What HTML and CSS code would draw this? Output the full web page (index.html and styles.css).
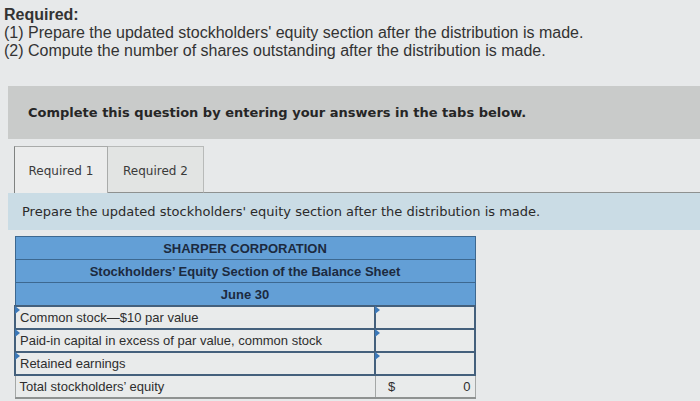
FILE: index.html
```html
<!DOCTYPE html>
<html>
<head>
<meta charset="utf-8">
<link rel="stylesheet" href="styles.css">
</head>
<body>
<div class="req">
  <div class="req-title">Required:</div>
  <div>(1) Prepare the updated stockholders' equity section after the distribution is made.</div>
  <div>(2) Compute the number of shares outstanding after the distribution is made.</div>
</div>
<div class="notice">Complete this question by entering your answers in the tabs below.</div>
<div class="tabs">
  <div class="tab active">Required 1</div>
  <div class="tab">Required 2</div>
  <div class="tab-rest"></div>
</div>
<div class="prompt">Prepare the updated stockholders' equity section after the distribution is made.</div>
<table class="sheet">
  <tr><th colspan="2">SHARPER CORPORATION</th></tr>
  <tr><th colspan="2">Stockholders’ Equity Section of the Balance Sheet</th></tr>
  <tr><th colspan="2">June 30</th></tr>
  <tr><td class="lbl mark">Common stock—$10 par value</td><td class="val mark"></td></tr>
  <tr><td class="lbl mark">Paid-in capital in excess of par value, common stock</td><td class="val mark"></td></tr>
  <tr><td class="lbl mark">Retained earnings</td><td class="val mark"></td></tr>
  <tr class="total"><td class="lbl">Total stockholders’ equity</td><td class="val"><span class="cur">$</span><span class="num">0</span></td></tr>
</table>
</body>
</html>
```
FILE: styles.css
```css
html, body {
  margin: 0;
  padding: 0;
}
body {
  width: 700px;
  height: 401px;
  overflow: hidden;
  background: #e7e9ea;
  color: #2b2b2b;
}
.req {
  padding: 6px 0 0 4px;
  font-family: "Liberation Sans", Arial, sans-serif;
  font-size: 16px;
  line-height: 18px;
  color: #333;
}
.req-title {
  font-weight: bold;
}
.notice {
  margin: 26px 0 0 8px;
  height: 53px;
  background: #c9cbca;
  font-family: "DejaVu Sans", Verdana, sans-serif;
  font-weight: bold;
  font-size: 13px;
  color: #262626;
  display: flex;
  align-items: center;
  padding-left: 20px;
}
.tabs {
  display: flex;
  margin: 7px 0 0 14px;
  height: 47px;
}
.tab {
  width: 94px;
  display: flex;
  align-items: center;
  justify-content: center;
  font-family: "DejaVu Sans", Verdana, sans-serif;
  font-size: 12px;
  color: #3a3a3a;
  background: #e2e4e3;
  border: 1px solid #b8bab9;
  border-bottom: 1px solid #8e9190;
  box-sizing: border-box;
  padding-top: 2px;
}
.tab + .tab {
  width: 96px;
  border-left: none;
}
.tab.active {
  background: #ebecec;
  border-bottom: none;
  border-color: #a9abaa;
  border-left-color: #7f8281;
}
.tab-rest {
  flex: 1;
  border-bottom: 1px solid #8e9190;
}
.prompt {
  margin-left: 8px;
  height: 37px;
  background: #cadce5;
  display: flex;
  align-items: center;
  padding-left: 14px;
  font-family: "DejaVu Sans", Verdana, sans-serif;
  font-size: 13px;
  color: #2a2a2a;
}
.sheet {
  margin: 6px 0 0 14px;
  border-collapse: collapse;
  width: 462px;
  font-family: "Liberation Sans", Arial, sans-serif;
  font-size: 13px;
}
.sheet th {
  background: #639fd6;
  color: #1c2a3f;
  font-weight: bold;
  font-size: 13px;
  height: 22px;
  padding: 0;
  border: 1px solid #3d6890;
  text-align: center;
}
.sheet td {
  height: 21px;
  padding: 0 4px;
  background: #e9ebeb;
  border: 2px solid #44607c;
  color: #2e2e2e;
  position: relative;
}
.sheet .lbl {
  width: 352px;
}
.sheet .val {
  width: 90px;
}
.sheet .mark::before {
  content: "";
  position: absolute;
  left: -1px;
  top: -1px;
  border-top: 4px solid transparent;
  border-bottom: 4px solid transparent;
  border-left: 5px solid #3b78b8;
}
.total td {
  border: 1px solid #a4a7a6;
  border-bottom: 2px solid #8f9291;
}
.cur {
  margin-left: 8px;
}
.num {
  float: right;
}
```
